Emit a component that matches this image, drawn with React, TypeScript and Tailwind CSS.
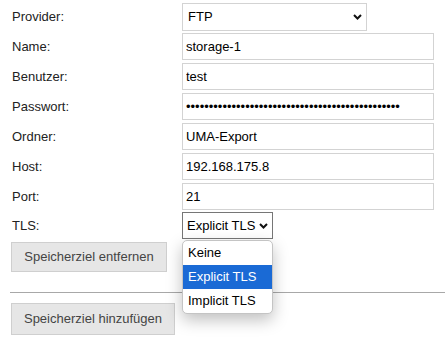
import React from 'react'

const font = { fontFamily: '"Liberation Sans", Arial, sans-serif' }

const Chevron: React.FC = () => (
  <svg width="9" height="6" viewBox="0 0 9 6" className="shrink-0">
    <path d="M1 1 L4.5 4.5 L8 1" fill="none" stroke="#111" strokeWidth="2" />
  </svg>
)

interface RowProps {
  label: string;
  children: React.ReactNode;
  className?: string;
}

const Row: React.FC<RowProps> = ({ label, children, className }) => (
  <div className={`flex items-center ${className ?? ''}`}>
    <label className="w-[171px] shrink-0 pl-[1px] text-[13px] text-[#222]">{label}</label>
    {children}
  </div>
)

const TextField: React.FC<{ value: string; type?: string }> = ({ value, type = 'text' }) => (
  <input
    type={type}
    defaultValue={value}
    readOnly
    className="h-[27px] w-[252px] border border-[#d3d3d3] bg-white px-[3px] text-[13px] text-black outline-none"
    style={font}
  />
)

const fields = [
  { label: 'Name:', value: 'storage-1' },
  { label: 'Benutzer:', value: 'test' },
  { label: 'Passwort:', value: 'x'.repeat(47), type: 'password' },
  { label: 'Ordner:', value: 'UMA-Export' },
  { label: 'Host:', value: '192.168.175.8' },
  { label: 'Port:', value: '21' },
]

export default function App() {
  return (
    <div className="h-[338px] w-[445px] overflow-hidden bg-white pl-[11px] pt-[3px]" style={font}>
      <Row label="Provider:">
        <div className="flex h-[28px] w-[185px] items-center justify-between border border-[#d3d3d3] bg-white pl-[5px] pr-[4px] text-[13px] text-black">
          <span>FTP</span>
          <Chevron />
        </div>
      </Row>

      <div className="mt-[2px] flex flex-col gap-[3px]">
        {fields.map((f) => (
          <Row key={f.label} label={f.label}>
            <TextField value={f.value} type={f.type} />
          </Row>
        ))}
      </div>

      <Row label="TLS:" className="relative mt-[2px]">
        <div className="flex h-[27px] w-[91px] items-center gap-[4px] border border-[#767676] bg-white pl-[4px] text-[13px] text-black">
          <span>Explicit TLS</span>
          <Chevron />
        </div>
        <ul className="absolute left-[171px] top-[28px] z-10 w-[91px] overflow-hidden rounded-[5px] border border-[#c4c4c4] bg-white text-[13px] text-black shadow-[0_6px_16px_rgba(0,0,0,0.25)]">
          <li className="flex h-[24px] items-center pl-[5px]">Keine</li>
          <li className="flex h-[24px] items-center bg-[#1a6ad5] pl-[5px] text-white">Explicit TLS</li>
          <li className="flex h-[24px] items-center pl-[5px]">Implicit TLS</li>
        </ul>
      </Row>

      <button className="mt-[3px] h-[30px] w-[156px] border border-[#cfcfcf] bg-[#e6e6e6] text-[13px] text-[#444]">
        Speicherziel entfernen
      </button>

      <hr className="-ml-[1px] mt-[20px] border-t border-[#a8a8a8]" />

      <button className="mt-[10px] h-[32px] w-[164px] border border-[#cfcfcf] bg-[#e6e6e6] text-[13px] text-[#444]">
        Speicherziel hinzufügen
      </button>
    </div>
  )
}
